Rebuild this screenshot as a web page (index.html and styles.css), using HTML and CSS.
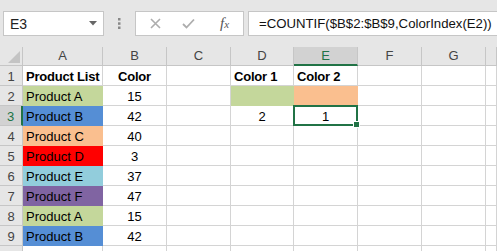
FILE: index.html
```html
<!DOCTYPE html>
<html lang="en">
<head>
    <meta charset="UTF-8">
    <title>COUNTIF ColorIndex</title>
    <link rel="stylesheet" href="styles.css">
</head>
<body>
    <div class="formula-bar">
        <div class="name-box">
            <span>E3</span>
            <svg class="drop" width="8" height="5" viewBox="0 0 8 5"><path d="M0 0 H8 L4 4.5 Z" fill="#666"/></svg>
        </div>
        <div class="grip">
            <svg width="3" height="11" viewBox="0 0 3 11"><rect x="0" y="0" width="2.5" height="2.5" fill="#888"/><rect x="0" y="4.3" width="2.5" height="2.5" fill="#888"/><rect x="0" y="8.5" width="2.5" height="2.5" fill="#888"/></svg>
        </div>
        <div class="fx-box">
            <svg class="cancel" width="11" height="11" viewBox="0 0 11 11"><path d="M1 1 L10 10 M10 1 L1 10" stroke="#adadad" stroke-width="1.6"/></svg>
            <svg class="enter" width="13" height="11" viewBox="0 0 13 11"><path d="M1 6 L4.5 9.5 L12 1.5" stroke="#adadad" stroke-width="1.8" fill="none"/></svg>
            <span class="fx">f<small>x</small></span>
        </div>
        <div class="formula">=COUNTIF($B$2:$B$9,ColorIndex(E2))</div>
    </div>

    <div class="sheet">
        <div class="corner"><svg width="12" height="12" viewBox="0 0 12 12"><path d="M12 0 V12 H0 Z" fill="#c4c4c4"/></svg></div>
        <div class="ch">A</div>
        <div class="ch">B</div>
        <div class="ch">C</div>
        <div class="ch">D</div>
        <div class="ch sel">E</div>
        <div class="ch">F</div>
        <div class="ch">G</div>
        <div class="ch"></div>

        <div class="rh">1</div>
        <div class="c b">Product List</div>
        <div class="c b mid">Color</div>
        <div class="c"></div>
        <div class="c b">Color 1</div>
        <div class="c b">Color 2</div>
        <div class="c"></div>
        <div class="c"></div>
        <div class="c"></div>

        <div class="rh">2</div>
        <div class="c fill-green">Product A</div>
        <div class="c mid">15</div>
        <div class="c"></div>
        <div class="c fill-green"></div>
        <div class="c fill-peach"></div>
        <div class="c"></div>
        <div class="c"></div>
        <div class="c"></div>

        <div class="rh sel">3</div>
        <div class="c fill-blue">Product B</div>
        <div class="c mid">42</div>
        <div class="c"></div>
        <div class="c mid">2</div>
        <div class="c mid active">1</div>
        <div class="c"></div>
        <div class="c"></div>
        <div class="c"></div>

        <div class="rh">4</div>
        <div class="c fill-peach">Product C</div>
        <div class="c mid">40</div>
        <div class="c"></div>
        <div class="c"></div>
        <div class="c"></div>
        <div class="c"></div>
        <div class="c"></div>
        <div class="c"></div>

        <div class="rh">5</div>
        <div class="c fill-red">Product D</div>
        <div class="c mid">3</div>
        <div class="c"></div>
        <div class="c"></div>
        <div class="c"></div>
        <div class="c"></div>
        <div class="c"></div>
        <div class="c"></div>

        <div class="rh">6</div>
        <div class="c fill-aqua">Product E</div>
        <div class="c mid">37</div>
        <div class="c"></div>
        <div class="c"></div>
        <div class="c"></div>
        <div class="c"></div>
        <div class="c"></div>
        <div class="c"></div>

        <div class="rh">7</div>
        <div class="c fill-purple">Product F</div>
        <div class="c mid">47</div>
        <div class="c"></div>
        <div class="c"></div>
        <div class="c"></div>
        <div class="c"></div>
        <div class="c"></div>
        <div class="c"></div>

        <div class="rh">8</div>
        <div class="c fill-green">Product A</div>
        <div class="c mid">15</div>
        <div class="c"></div>
        <div class="c"></div>
        <div class="c"></div>
        <div class="c"></div>
        <div class="c"></div>
        <div class="c"></div>

        <div class="rh">9</div>
        <div class="c fill-blue">Product B</div>
        <div class="c mid">42</div>
        <div class="c"></div>
        <div class="c"></div>
        <div class="c"></div>
        <div class="c"></div>
        <div class="c"></div>
        <div class="c"></div>

        <div class="rh last"></div>
        <div class="c last"></div>
        <div class="c last"></div>
        <div class="c last"></div>
        <div class="c last"></div>
        <div class="c last"></div>
        <div class="c last"></div>
        <div class="c last"></div>
        <div class="c last"></div>
    </div>
</body>
</html>
```

FILE: styles.css
```css
body {
    margin: 0;
    width: 497px;
    height: 251px;
    overflow: hidden;
    background-color: #ffffff;
    font-family: "Liberation Sans", Arial, sans-serif;
    font-size: 13px;
    color: #000;
}

/* formula bar */
.formula-bar {
    display: flex;
    align-items: stretch;
    height: 25px;
    padding: 11px 0 11px 3px;
    background-color: #e6e6e6;
}
.name-box {
    width: 101px;
    box-sizing: border-box;
    display: flex;
    align-items: center;
    justify-content: space-between;
    padding: 0 6px 0 6px;
    background-color: #fff;
    border: 1px solid #c6c6c6;
    font-size: 14px;
    color: #222;
}
.name-box .drop {
    margin-top: -1px;
}
.grip {
    width: 31px;
    display: flex;
    align-items: center;
    justify-content: center;
}
.fx-box {
    width: 109px;
    box-sizing: border-box;
    display: flex;
    align-items: center;
    background-color: #fff;
    border: 1px solid #c6c6c6;
}
.fx-box .cancel {
    margin-left: 14px;
}
.fx-box .enter {
    margin-left: 21px;
}
.fx {
    margin-left: 25px;
    font-family: "Liberation Serif", "Times New Roman", serif;
    font-style: italic;
    font-size: 15px;
    color: #555;
}
.fx small {
    font-size: 11px;
}
.formula {
    flex: 1;
    margin-left: 4px;
    box-sizing: border-box;
    display: flex;
    align-items: center;
    padding-left: 10px;
    background-color: #fff;
    border: 1px solid #c6c6c6;
    border-right: 0;
    font-size: 13.2px;
    color: #111;
    white-space: nowrap;
    overflow: hidden;
}

/* grid */
.sheet {
    display: grid;
    grid-template-columns: 23px 80px 64px 64px 63px 64px 64px 64px 11px;
    grid-template-rows: 19px repeat(9, 20px) 6px;
}
.sheet > div {
    box-sizing: border-box;
    overflow: hidden;
    white-space: nowrap;
}
.sheet > .last {
    border-bottom: 0;
}
.corner {
    background-color: #e6e6e6;
    border-right: 1px solid #c6c6c6;
    border-bottom: 1px solid #c6c6c6;
    display: flex;
    align-items: flex-end;
    justify-content: flex-end;
    padding: 0 2px 2px 0;
}
.ch {
    background-color: #e6e6e6;
    border-right: 1px solid #c6c6c6;
    border-bottom: 1px solid #c6c6c6;
    text-align: center;
    line-height: 18px;
    color: #444;
}
.ch.sel {
    background-color: #d2d2d2;
    border-bottom: 2px solid #217346;
    color: #217346;
}
.rh {
    background-color: #e6e6e6;
    border-right: 1px solid #c6c6c6;
    border-bottom: 1px solid #c6c6c6;
    text-align: center;
    line-height: 19px;
    padding-top: 1px;
    color: #444;
}
.rh.sel {
    background-color: #d2d2d2;
    border-right: 2px solid #217346;
    color: #217346;
}
.c {
    border-right: 1px solid #d4d4d4;
    border-bottom: 1px solid #d4d4d4;
    line-height: 19px;
    padding: 1px 3px 0 3px;
}
.b {
    font-weight: bold;
    letter-spacing: -0.2px;
}
.mid {
    text-align: center;
}

/* fills */
.fill-green { background-color: #c4d79b; border-color: #c4d79b; }
.fill-blue { background-color: #558ed5; border-color: #558ed5; }
.fill-peach { background-color: #fabf8f; border-color: #fabf8f; }
.fill-red { background-color: #ff0000; border-color: #ff0000; }
.fill-aqua { background-color: #92cddc; border-color: #92cddc; }
.fill-purple { background-color: #8064a2; border-color: #8064a2; }

/* active cell */
.sheet > .active {
    position: relative;
    overflow: visible;
}
.active::after {
    content: "";
    position: absolute;
    left: -1px;
    top: -1px;
    right: -1px;
    bottom: -1px;
    border: 2px solid #217346;
}
.active::before {
    content: "";
    position: absolute;
    right: -3px;
    bottom: -3px;
    width: 5px;
    height: 5px;
    background-color: #217346;
    border: 1px solid #fff;
    z-index: 1;
}
```
